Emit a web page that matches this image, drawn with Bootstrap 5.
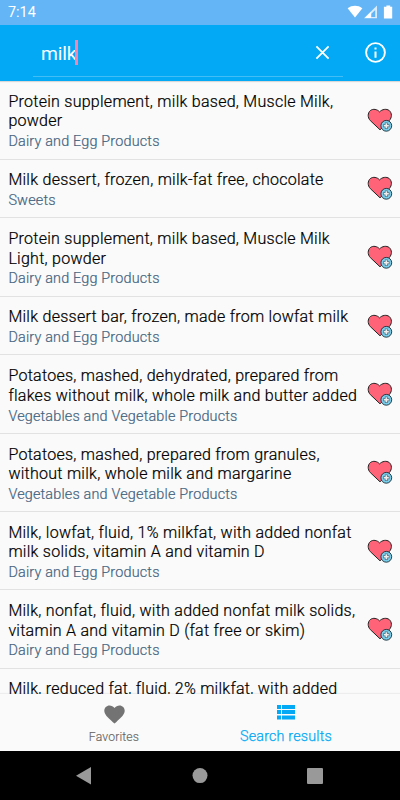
<!DOCTYPE html>
<html lang="en">
<head>
<meta charset="utf-8">
<meta name="viewport" content="width=device-width, initial-scale=1">
<title>Food search</title>
<link href="https://cdn.jsdelivr.net/npm/bootstrap@5.3.0/dist/css/bootstrap.min.css" rel="stylesheet">
<style>
body{font-family:Roboto,sans-serif;background:#fafafa}
.screen{width:400px;height:800px}
svg{display:block;flex:none}
.status{height:24.5px;background:#64b5f6;font-size:14.4px;padding:2px 7px 0 8px}
.appbar{height:56.5px;background:#03a9f4;padding:0 14px 5px 33px;box-shadow:0 1px 1px #0002;z-index:2;position:relative}
.query{width:310px;height:52px;border-bottom:1px solid #42bdf5;font-size:19.2px;padding:4px 13px 0 8px}
.query span{padding-top:4px;letter-spacing:-.1px}
.caret{width:3px;height:25px;background:#f485b0;margin-left:-1px}
.info{margin-top:5px}
.results{min-height:0;padding-top:.3px}
.food{height:78.3px;border-bottom:1.6px solid #e2e2e2;padding:0 7px 0 8.4px;flex:none}
.food.short{height:58.8px}
.food:last-child{border:0;height:26px;padding-top:10px}
.food .words{white-space:nowrap;padding-top:3.5px}
.food:last-child .words{padding-top:0}
.title{font-size:16px;line-height:19.4px;color:#000;letter-spacing:.265px;font-weight:300;-webkit-text-stroke:.22px}
.group{font-size:14.4px;line-height:19px;color:#45647f;letter-spacing:.18px;margin-top:1.5px;font-weight:300;-webkit-text-stroke:.2px}
.tabs{height:57px;background:#fafafa;box-shadow:0 -1px 1px #0000000d;z-index:2;position:relative;padding:0 28px;flex:none}
.tab{width:172px;color:#666;font-size:12.2px;line-height:16px;padding-top:11px;gap:5px;font-weight:300;letter-spacing:.15px;-webkit-text-stroke:.15px}
.tab.current{color:#03a9f4;font-size:14.3px;gap:8px;-webkit-text-stroke:.25px;letter-spacing:.2px}
.sysnav{height:49px;background:#000;flex:none}
</style>
</head>
<body>
<svg width="0" height="0" class="position-absolute">
<symbol id="fav" viewBox="0 0 26 26">
<path d="M13 22.800 3.300 13.600C.4 10.400.6 6 3.300 3.600c2.900-2.200 6.800-1.400 9.300 1.300 2.500-2.700 6.800-3.500 9.700-1.300 2.700 2.400 2.900 6.800 0 10z" fill="#ff6378" stroke="#222" stroke-width="1"/>
<circle cx="19.300" cy="18.800" r="5.400" fill="#78cdea" stroke="#182c36" stroke-width=".9"/>
<path d="M19.300 15.600v6.400M16.100 18.800h6.400" stroke="#54717f" stroke-width="2.900"/>
<path d="M19.300 16.300v5M16.800 18.800h5" stroke="#eee" stroke-width="1.600"/>
</symbol>
</svg>
<main class="screen d-flex flex-column overflow-hidden">
<div class="status d-flex justify-content-between align-items-center text-white flex-shrink-0"><span>7:14</span>
<svg width="46" height="16" viewBox="0 0 46 16" fill="#fff"><path d="M.6 3.200C5-.1 11-.1 15.400 3.200L8 12.500z"/><path d="M30 .5v12.800H17zM28.200 4.900 24.300 8.800v3.300h3.900z" fill-rule="evenodd" opacity=".75"/><path d="M23.800 7v6h-6z"/><path d="M39.400.6h3.800v1.200h2v11.600h-8.300V1.800h2.500z"/></svg></div>
<header class="appbar d-flex justify-content-between align-items-start flex-shrink-0">
<div class="query d-flex align-items-center text-white"><span>milk</span><i class="caret"></i>
<svg class="ms-auto" width="15" height="15" viewBox="0 0 16 16" fill="none" stroke="#fff" stroke-width="1.900"><path d="m1.500 1.500 13 13m0-13-13 13"/></svg></div>
<svg class="info align-self-center" width="21" height="21" viewBox="0 0 21 21"><circle cx="10.500" cy="10.500" r="9.400" fill="none" stroke="#fff" stroke-width="1.900"/><path d="M9.500 5.400h2v2h-2zm0 4.100h2v6.200h-2z" fill="#fff"/></svg>
</header>
<section class="results flex-grow-1 d-flex flex-column overflow-hidden">
<article class="food d-flex align-items-center justify-content-between"><div class="words"><div class="title">Protein supplement, milk based, Muscle Milk,<br>powder</div><div class="group">Dairy and Egg Products</div></div><svg width="26" height="26"><use href="#fav"/></svg></article>
<article class="food short d-flex align-items-center justify-content-between"><div class="words"><div class="title">Milk dessert, frozen, milk-fat free, chocolate</div><div class="group">Sweets</div></div><svg width="26" height="26"><use href="#fav"/></svg></article>
<article class="food d-flex align-items-center justify-content-between"><div class="words"><div class="title">Protein supplement, milk based, Muscle Milk<br>Light, powder</div><div class="group">Dairy and Egg Products</div></div><svg width="26" height="26"><use href="#fav"/></svg></article>
<article class="food short d-flex align-items-center justify-content-between"><div class="words"><div class="title">Milk dessert bar, frozen, made from lowfat milk</div><div class="group">Dairy and Egg Products</div></div><svg width="26" height="26"><use href="#fav"/></svg></article>
<article class="food d-flex align-items-center justify-content-between"><div class="words"><div class="title">Potatoes, mashed, dehydrated, prepared from<br>flakes without milk, whole milk and butter added</div><div class="group">Vegetables and Vegetable Products</div></div><svg width="26" height="26"><use href="#fav"/></svg></article>
<article class="food d-flex align-items-center justify-content-between"><div class="words"><div class="title">Potatoes, mashed, prepared from granules,<br>without milk, whole milk and margarine</div><div class="group">Vegetables and Vegetable Products</div></div><svg width="26" height="26"><use href="#fav"/></svg></article>
<article class="food d-flex align-items-center justify-content-between"><div class="words"><div class="title">Milk, lowfat, fluid, 1% milkfat, with added nonfat<br>milk solids, vitamin A and vitamin D</div><div class="group">Dairy and Egg Products</div></div><svg width="26" height="26"><use href="#fav"/></svg></article>
<article class="food d-flex align-items-center justify-content-between"><div class="words"><div class="title">Milk, nonfat, fluid, with added nonfat milk solids,<br>vitamin A and vitamin D (fat free or skim)</div><div class="group">Dairy and Egg Products</div></div><svg width="26" height="26"><use href="#fav"/></svg></article>
<article class="food d-flex align-items-start"><div class="words"><div class="title">Milk, reduced fat, fluid, 2% milkfat, with added</div></div></article>
</section>
<nav class="tabs d-flex">
<div class="tab d-flex flex-column align-items-center"><svg width="21" height="19" viewBox="0 0 21 19"><path d="M10.500 18.600 8.900 17.200C3.400 12.200.3 9.400.3 5.800.3 2.900 2.600.6 5.500.6c1.900 0 3.900.9 5 2.500C11.700 1.500 13.600.6 15.500.6c2.900 0 5.200 2.300 5.200 5.200 0 3.600-3.100 6.400-8.600 11.400z" fill="#737373"/></svg><span>Favorites</span></div>
<div class="tab current d-flex flex-column align-items-center"><svg width="18" height="15" viewBox="0 0 18 15" fill="#03a9f4"><path d="M0 0h4v4H0zm5 0h13v4H5zM0 5h4v4H0zm5 0h13v4H5zM0 10.500h4v4H0zm5 0h13v4H5z"/></svg><span>Search results</span></div>
</nav>
<footer class="sysnav d-flex align-items-center justify-content-center">
<svg width="400" height="49" viewBox="0 0 400 49" fill="#999"><path d="M76 24.700 91 16v17.500z"/><circle cx="200" cy="24.600" r="7.500"/><rect x="307" y="17" width="16" height="16" rx="1"/></svg>
</footer>
</main>
<script src="https://cdn.jsdelivr.net/npm/bootstrap@5.3.0/dist/js/bootstrap.bundle.min.js"></script>
</body>
</html>
